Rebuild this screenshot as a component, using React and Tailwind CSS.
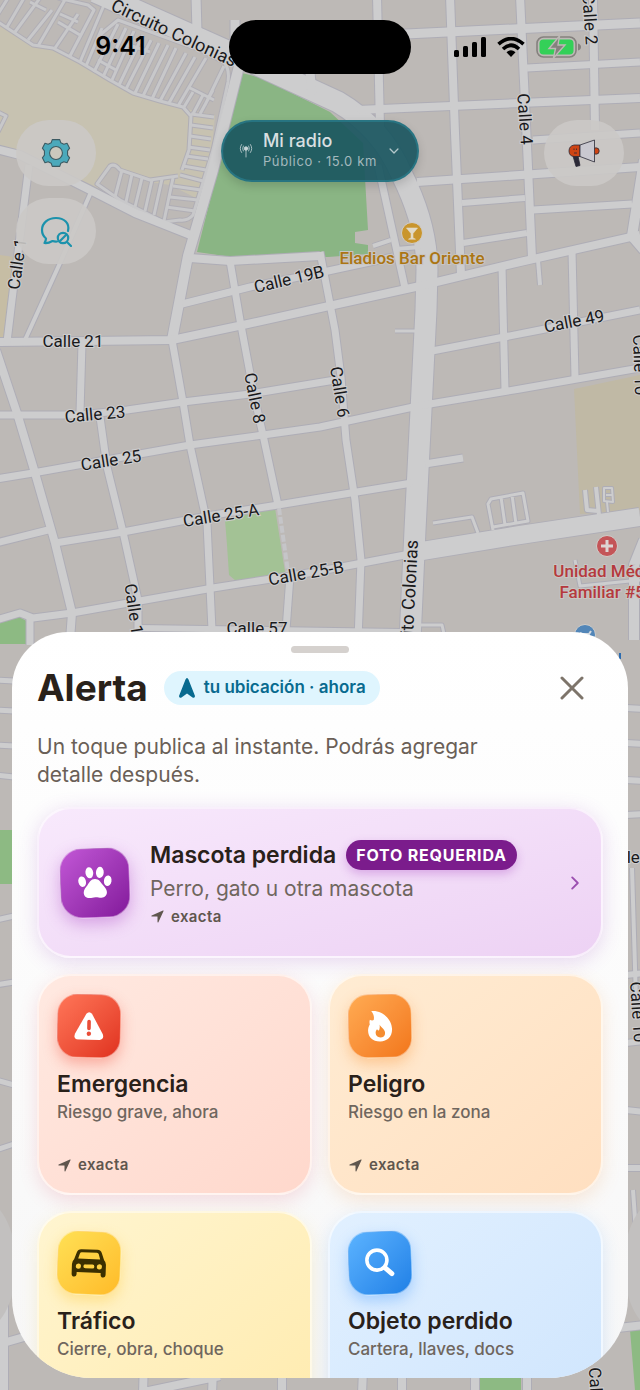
import { useState } from "react";
import { IoChevronDown, IoChevronForward, IoNavigate } from "react-icons/io5";

const ROADS = [
    { w: 21, d: "M95 -8L225 50L338 102Q382 128 402 175Q427 225 427 270L426 310L415 530L410 640" },
    { w: 18, d: "M416 552L520 535L640 517" },
    { w: 10, d: "M240 62L213 170L188 256L172 340" },
    { w: 8, d: "M-4 149L20 155L90 190L135 213L193 236" },
    { w: 8, d: "M190 258L230 261L320 256" },
    { w: 8, d: "M-4 342L172 340L243 325L320 308L420 286L520 262L640 235" },
    { w: 7, d: "M182 304L250 287L328 271L393 257" },
    { w: 7, d: "M320 252L335 330L341 377L346 440L355 500L361 560L358 640" },
    { w: 7, d: "M230 261L240 320L255 400L263 435L278 505" },
    { w: 7, d: "M290 576L286 630" },
    { w: 7, d: "M-4 415L80 415L127 410L183 402L250 394L335 380" },
    { w: 7, d: "M-4 479L33 473L190 445L263 435L320 427L418 406L520 389L640 368" },
    { w: 7, d: "M-4 543L48 530M55 543L123 532L213 515L278 505L320 498L412 483" },
    { w: 7, d: "M-4 620L20 613L33 618L72 613L213 588L290 576L320 571L410 554" },
    { w: 7, d: "M172 340L183 402L190 445L207 523L212 630" },
    { w: 8, d: "M-4 350L17 413L35 473L55 543L72 613L70 640" },
    { w: 7, d: "M100 417L107 467L123 532L138 600L138 640" },
    { w: 7, d: "M82 343L80 413" },
    { w: 7, d: "M29 165L12 300L7 342" },
    { w: 4, d: "M91 192L60 263L35 318L25 340" },
    { w: 7, d: "M30 616L30 645" },
    { w: 6, d: "M140 628L400 632" },
    { w: 9, d: "M385 35L640 23" },
    { w: 7, d: "M527 68L640 62" },
    { w: 8, d: "M357 110L640 98" },
    { w: 7, d: "M533 140L640 133" },
    { w: 8, d: "M417 182L640 167" },
    { w: 6, d: "M462 203L525 198" },
    { w: 7, d: "M533 210L632 204" },
    { w: 6, d: "M463 243L527 233" },
    { w: 8, d: "M377 -4L380 127" },
    { w: 7, d: "M378 165L405 288" },
    { w: 9, d: "M235 20L235 50M196 -4L197 32" },
    { w: 9, d: "M310 72L312 95" },
    { w: 8, d: "M450 -4L455 133L461 275" },
    { w: 8, d: "M520 -4L528 167L532 258" },
    { w: 8, d: "M593 -4L595 130" },
    { w: 10, d: "M644 160L632 236L644 250" },
    { w: 7, d: "M502 266L503 310L505 390" },
    { w: 7, d: "M572 251L575 377" },
    { w: 4, d: "M538 260L540 285" },
    { w: 7, d: "M432 351L540 330L640 310" },
    { w: 3, d: "M395 331L416 331" },
    { w: 4, d: "M373 246L391 240M396 249L420 247" },
    { w: 7, d: "M425 464L463 458" },
    { w: 3, d: "M433 523L472 517L478 533" },
    { w: 3, d: "M493 530L488 504L491 499L523 493L528 521L493 527M501 497L505 525M512 495L516 524" },
    { w: 4, d: "M585 490L587 510L598 511M596 487L599 515" },
    { w: 2, d: "M604 488L612 488L613 502L604 501ZM606 495L613 495M607 502L608 512" },
    { w: 3, d: "M575 560L580 586L640 580" },
    { w: 10, d: "M644 540L634 565L634 640" },
    { w: 3, d: "M420 625L442 625L444 634" },
    { w: 5, d: "M-4 680L14 681M-4 710L14 711M-4 745L14 746M-4 775L14 777M-4 920L14 916M-4 985L14 982M-4 1080L14 1085M-4 1150L14 1144" },
    { w: 6, d: "M626 708L644 709M626 743L644 744M626 780L644 781M626 815L644 814M626 975L644 973M626 1043L644 1041M626 1110L644 1112M626 1168L644 1168" },
    { w: 4, d: "M632 868L636 1000M633 1190L640 1290" },
    { w: 8, d: "M-4 1345L24 1337L70 1322M4 1300L4 1394M144 1360L143 1394M213 1370L212 1394M282 1370L282 1394M144 1392L220 1376" },
    { w: 8, d: "M363 1370L362 1394M402 1370L402 1394M475 1370L475 1394M527 1370L527 1394M600 1330L644 1325" },
];

// streets of the housing blocks beside the open lot
const LANES = [
    "M-2 22L33 45L53 48L80 62L110 80L133 93L160 101L183 107L191 116L189 150L182 170",
    "M100 35L118 20L200 50L224 62Q230 70 228 82L213 150L193 215Q188 221 180 220L164 222L120 200L97 184L110 166Q115 163 120 170L150 180L178 176",
    "M8 -2L-2 14M24 -2L7 27M40 -2L15 32M52 10L28 40M66 -2L38 46M78 14L55 48M58 -2L88 5L94 10L70 56M30 2L46 10",
    "M104 5L80 62M102 28L86 66M60 14L78 22M58 22L80 35M118 24L94 72M126 28L103 77M134 31L112 80M143 35L119 85M151 40L126 89",
    "M159 43L135 93M168 45L143 96M176 48L152 99M186 53L160 101M195 57L169 103M98 60L116 70M126 44L150 52M206 58L178 106",
    "M188 87L214 100M213 90L200 114M224 66L205 105M193 92L184 107M203 95L193 114",
    "M191 114L214 117M191 125L213 128M190 136L211 139M188 147L210 150M186 156L208 159M183 166L206 170M180 175L203 181M173 186L201 190M170 197L198 200M166 207L195 211",
    "M122 170L115 197M132 174L126 202M142 178L135 207M152 180L145 211M162 179L154 215M173 178L164 221",
    "M-2 112L6 116L-2 132",
];

const STREET_NAMES = [
    { x: 590, y: 19, a: 86, t: "Calle 2" },
    { x: 525, y: 119, a: 86, t: "Calle 4" },
    { x: 17, y: 264, a: -82, t: "Calle 1" },
    { x: 289, y: 279, a: -13, t: "Calle 19B" },
    { x: 73, y: 341, a: 0, t: "Calle 21" },
    { x: 574, y: 321, a: -11, t: "Calle 49" },
    { x: 255, y: 398, a: 79, t: "Calle 8" },
    { x: 340, y: 392, a: 81, t: "Calle 6" },
    { x: 95, y: 414, a: -5, t: "Calle 23" },
    { x: 111, y: 460, a: -9, t: "Calle 25" },
    { x: 221, y: 515, a: -9, t: "Calle 25-A" },
    { x: 306, y: 573, a: -10, t: "Calle 25-B" },
    { x: 134, y: 609, a: 82, t: "Calle 1" },
    { x: 257, y: 628, a: 0, t: "Calle 57" },
    { x: 640, y: 365, a: 88, t: "Calle 10" },
    { x: 621, y: 857, a: 0, t: "Calle" },
    { x: 638, y: 1012, a: 86, t: "Calle 10" },
    { x: 596, y: 1386, a: 86, t: "Calle" },
];

const AVENUE_NAMES = [
    { x: 174, y: 33, a: 25, t: "Circuito Colonias" },
    { x: 409, y: 597, a: -87, t: "cuito Colonias" },
];

const ALERTS = [
    {
        id: "emergencia", title: "Emergencia", detail: "Riesgo grave, ahora", Icon: WarningIcon,
        card: "from-[#ffe9e1] to-[#ffd8cc] shadow-[0_6px_18px_rgba(220,90,110,0.18)]",
        tile: "from-[#ff7558] to-[#e0301e] rotate-1 text-white shadow-[0_6px_14px_rgba(240,70,50,0.35)]",
    },
    {
        id: "peligro", title: "Peligro", detail: "Riesgo en la zona", Icon: FlameIcon,
        card: "from-[#ffecd3] to-[#ffdfc0] shadow-[0_6px_18px_rgba(240,150,70,0.18)]",
        tile: "from-[#ffab52] to-[#f27618] -rotate-1 text-white shadow-[0_6px_14px_rgba(250,140,40,0.35)]",
    },
    {
        id: "trafico", title: "Tráfico", detail: "Cierre, obra, choque", Icon: CarIcon,
        card: "from-[#fff5d0] to-[#ffebae] shadow-[0_6px_18px_rgba(240,200,70,0.18)]",
        tile: "from-[#ffe054] to-[#ffbb27] rotate-2 text-[#3b2f00] shadow-[0_6px_14px_rgba(255,200,50,0.4)]",
    },
    {
        id: "objeto", title: "Objeto perdido", detail: "Cartera, llaves, docs", Icon: SearchIcon,
        card: "from-[#e1f0ff] to-[#cfe5fd] shadow-[0_6px_18px_rgba(70,150,240,0.18)]",
        tile: "from-[#5bb3ff] to-[#1f80e6] -rotate-2 text-white shadow-[0_6px_14px_rgba(60,150,255,0.35)]",
    },
];

function PawIcon() {
    return (
        <svg viewBox="0 0 34 34" className="size-[34px]" fill="currentColor">
            <ellipse cx="11.7" cy="6.6" rx="3.9" ry="5.6" transform="rotate(-6 11.7 6.6)" />
            <ellipse cx="22.2" cy="6.6" rx="3.9" ry="5.6" transform="rotate(6 22.2 6.6)" />
            <ellipse cx="4.2" cy="15.2" rx="3.8" ry="5.3" transform="rotate(-12 4.2 15.2)" />
            <ellipse cx="29.8" cy="15.2" rx="3.8" ry="5.3" transform="rotate(12 29.8 15.2)" />
            <path d="M17 13c-4 0-5.500 3-7.600 6-2 2.600-4 4.200-4 7.400 0 3.500 2.500 5.500 5.600 5.500 2.200 0 3.700-.7 6-.7s3.800.7 6 .7c3.100 0 5.600-2 5.600-5.500 0-3.200-2-4.800-4-7.400-2.100-3-3.600-6-7.600-6z" />
        </svg>
    );
}

function WarningIcon() {
    return (
        <svg viewBox="0 0 30 28" className="w-[30px] h-7">
            <path d="M12.200 1.800q2.800-3.200 5.600 0l11 20q2 5-3 6h-21.600q-5-1-3-6z" fill="currentColor" />
            <path d="M15 9.500v7" stroke="#e94d38" strokeWidth="3.600" strokeLinecap="round" />
            <circle cx="15" cy="21.700" r="2.200" fill="#e94d38" />
        </svg>
    );
}

function FlameIcon() {
    return (
        <svg viewBox="0 0 26 32" className="w-[26px] h-8">
            <path d="M4.500 1C14 0 24.800 8 25 19.500 25 27 20 31.500 13 31.500 5.500 31.500 1 27 1 20.500c0-2.200.8-4.500 1.800-6.200C2.400 12.500 2.400 11 3 9.500c1 .8 2.600 1 3.800.5C7.500 7 7 3.500 4.500 1z" fill="currentColor" />
            <path d="M12.500 14.500c.3 2 5.500 4.500 5.500 8.500 0 3-2.200 4.500-4.800 4.500S8.500 25.800 8.500 23c0-1.600.6-2.700 1.500-3.700.5.8 1 1.200 1.800 1.200.9-1.500 1.200-3.500.7-6z" fill="#f58d31" />
        </svg>
    );
}

function CarIcon() {
    return (
        <svg viewBox="0 0 36 30" className="w-9 h-[30px]">
            <path d="M10 1.500h16q3.500 0 4.500 3.200l2.500 7q2 1.800 2 4.800v9.500q0 3-2.500 3t-2.500-3v-1.500H6V26q0 3-2.500 3T1 26v-9.500q0-3 2-4.800l2.500-7Q6.500 1.500 10 1.500z" fill="currentColor" />
            <path d="M10.500 4.500h15q1.500 0 2 1.500l1.500 5H7l1.500-5q.5-1.500 2-1.500z" fill="#ffd142" />
            <circle cx="7.500" cy="18.500" r="2.600" fill="#ffd142" />
            <circle cx="28.500" cy="18.500" r="2.600" fill="#ffd142" />
            <rect x="12.500" y="16.500" width="11" height="4" rx="2" fill="#ffd142" />
        </svg>
    );
}

function SearchIcon() {
    return (
        <svg viewBox="0 0 30 30" className="size-[30px]" fill="none" stroke="currentColor" strokeLinecap="round">
            <circle cx="12" cy="12" r="10" strokeWidth="3.600" />
            <path d="M20 20l6.500 6" strokeWidth="5" />
        </svg>
    );
}

function GearIcon() {
    return (
        <svg viewBox="0 0 28 28" className="size-[30px]">
            <path
                d="M10.500 1.500h7l1 3 2.800 1.300 3-.8 2.400 4.500-1.900 2.500v4l1.900 2.500-2.400 4.500-3-.8-2.800 1.300-1 3h-7l-1-3-2.800-1.300-3 .8-2.400-4.500 1.900-2.500v-4L1.300 9.500 3.700 5l3 .8 2.800-1.300z"
                fill="#4ba9bb" stroke="#3c5a62" strokeWidth="1" strokeLinejoin="round"
            />
            <circle cx="14" cy="14" r="6" fill="#cbc8bd" stroke="#3c5a62" strokeWidth="1" />
        </svg>
    );
}

function ChatSearchIcon() {
    return (
        <svg viewBox="0 0 32 32" className="size-8" fill="none" stroke="#1c92ac" strokeWidth="2.200" strokeLinecap="round" strokeLinejoin="round">
            <path d="M28 16C30 8 24 3 16 3 8 3 2 8 2 15c0 3.500 1.500 6.500 4 8.500 0 1.800-.6 3-1.500 4.500 3 .5 5.500-.6 8-2 1.500.5 3 .6 4.500.5" />
            <circle cx="23" cy="23" r="5.200" />
            <path d="M27 27l4 4M20 26l6-6" />
        </svg>
    );
}

function MegaphoneIcon() {
    return (
        <svg viewBox="0 0 32 28" className="w-8 h-7" stroke="#2b2937" strokeWidth="0.8" strokeLinejoin="round">
            <path d="M5 17h5l2 9.500-4 1z" fill="#2b2937" />
            <circle cx="28" cy="12" r="3.200" fill="#cf4413" />
            <path d="M12 6H6Q1 7 1 12t5 5.500h6z" fill="#cf4413" />
            <path d="M12 6L26.500 1v22L12 17.500z" fill="#c9c8d0" />
            <path d="M6 9.500v1.500M8.500 9.500v1.500M6 14h3" fill="none" />
        </svg>
    );
}

function AntennaIcon() {
    return (
        <svg viewBox="0 0 14 16" className="w-3.5 h-4 text-[#c9d6d8]" fill="none" stroke="currentColor" strokeWidth="0.8" strokeLinecap="round">
            <circle cx="7" cy="5.500" r="1.800" fill="currentColor" />
            <path d="M7 7v7M4.300 3q-1.500 2.500 0 5M9.700 3q1.500 2.500 0 5M2.600 1.500q-2.800 4 0 8M11.400 1.500q2.800 4 0 8" />
        </svg>
    );
}

function StatusIcons() {
    return (
        <div className="flex items-center gap-[11px]">
            <svg viewBox="0 0 32 20" className="w-8 h-5">
                <rect x="0" y="13" width="5" height="7" rx="1.500" />
                <rect x="9" y="9" width="5" height="11" rx="1.500" />
                <rect x="18" y="5" width="5" height="15" rx="1.500" />
                <rect x="27" y="0" width="5" height="20" rx="1.500" />
            </svg>
            <svg viewBox="0 0 28 20" className="w-7 h-5" fill="none" stroke="#000" strokeWidth="3.600">
                <path d="M1.500 7.200Q14-4 26.500 7.200M6 12Q14 4.500 22 12" />
                <path d="M9.500 15.200Q14 11.500 18.500 15.200L14 20z" fill="#000" stroke="none" />
            </svg>
            <svg viewBox="0 0 45 22" className="w-[45px] h-[22px]">
                <rect x="1" y="1" width="39" height="20" rx="6.500" fill="none" stroke="#85817e" strokeWidth="1.600" />
                <path d="M42 7.500q3 1 3 3.500t-3 3.500z" fill="#85817e" />
                <rect x="3.500" y="3.500" width="34" height="15" rx="4" fill="#34d058" />
                <path d="M23.500 0L13 12.500h6.500L17.500 22 29 9h-7z" fill="#85817e" stroke="#bdb9b6" strokeWidth="1.400" />
            </svg>
        </div>
    );
}

function MapBackdrop() {
    return (
        <svg
            viewBox="0 0 640 1390"
            preserveAspectRatio="xMidYMin slice"
            className="absolute inset-0 size-full"
            aria-hidden="true"
        >
            <rect width="640" height="1390" fill="#bdb9b6" />
            <path d="M0 25L33 46L60 50L80 62L110 80L133 95L160 102L187 109L215 115L212 150L200 200L170 185L150 182L112 166L98 188L60 170L0 150z" fill="#c7c2b1" />
            <path d="M0 255L14 257L6 338L0 338z" fill="#c6bda4" />
            <path d="M574 389L640 375L640 510L580 514z" fill="#c0b9a5" />
            <path d="M242 73L262 78L330 112L363 143L368 230L355 232L355 243L368 245L368 254L328 257L232 257L197 252z" fill="#8ab584" />
            <path d="M225 520L275 508L285 572L236 581L229 575L227 545z" fill="#a3c295" />
            <path d="M0 622L18 616L28 622L26 644L0 644z" fill="#8dba83" />
            <path d="M0 830L14 830L14 884L0 884zM480 1370L521 1370L521 1390L480 1390zM630 1330L640 1330L640 1390L635 1390z" fill="#8dba83" />

            <g fill="none" strokeLinejoin="round">
                {LANES.map((d) => <path key={d} d={d} stroke="#b0aeb5" strokeWidth="5" />)}
                {ROADS.map((r) => <path key={r.d} d={r.d} stroke="#aeadb6" strokeWidth={r.w + 2} />)}
                {LANES.map((d) => <path key={d} d={d} stroke="#c8c8ca" strokeWidth="3" />)}
                {ROADS.map((r) => <path key={r.d} d={r.d} stroke="#cdcdce" strokeWidth={r.w} />)}
                <path d="M279 508L288 572" stroke="#c5c5c8" strokeWidth="4" strokeDasharray="7 2" />
            </g>

            <ellipse cx="-20" cy="1265" rx="36" ry="66" fill="#c2c0bf" />
            <ellipse cx="660" cy="1265" rx="36" ry="66" fill="#c2c0bf" />

            <g
                fontFamily="Roboto, sans-serif" fill="#19191b" textAnchor="middle"
                stroke="#cdcdce" strokeWidth="2" paintOrder="stroke"
            >
                {STREET_NAMES.map((s) => (
                    <text key={`${s.t}-${s.x}`} fontSize="17" transform={`translate(${s.x} ${s.y}) rotate(${s.a})`} dy="6">{s.t}</text>
                ))}
                {AVENUE_NAMES.map((s) => (
                    <text key={s.t} fontSize="18" transform={`translate(${s.x} ${s.y}) rotate(${s.a})`} dy="6">{s.t}</text>
                ))}
            </g>

            <g fontFamily="Roboto, sans-serif" fontSize="17" fontWeight="500" textAnchor="middle" stroke="#c8c5c2" strokeWidth="2" paintOrder="stroke">
                <text x="412" y="264" fill="#ab7513">Eladios Bar Oriente</text>
                <text x="610" y="577" fill="#b5393d">Unidad Médica</text>
                <text x="607" y="598" fill="#b5393d">Familiar #59</text>
            </g>
            <circle cx="412" cy="233" r="10.500" fill="#c9952c" stroke="#d0cdc9" />
            <path d="M406.500 228h11l-4.500 5.500v4.500l2.500 1.200h-7l2.500-1.200v-4.500z" fill="#e2dac7" stroke="#e2dac7" strokeWidth="0.600" />
            <circle cx="607" cy="546" r="10.500" fill="#c45558" stroke="#d0cdc9" />
            <path d="M607 540v12M601 546h12" stroke="#ddd5d3" strokeWidth="3" />
            <circle cx="585" cy="635" r="10.500" fill="#5286b8" stroke="#d0cdc9" />
            <path d="M580 633l2 1h7l2-3" fill="none" stroke="#d5dae0" strokeWidth="2" />
            <path d="M620 653v6" stroke="#2c6cb0" strokeWidth="2" />
        </svg>
    );
}

function MapButton({ label, children }) {
    return (
        <button
            type="button"
            aria-label={label}
            className="w-20 h-[66px] rounded-full flex items-center justify-center bg-[#cbc9c6]/90"
        >
            {children}
        </button>
    );
}

function Precision() {
    return (
        <span className="flex items-center gap-1.5 text-[15px] leading-5 font-semibold tracking-wide text-[#5f564e]">
            <IoNavigate className="size-[15px]" />
            exacta
        </span>
    );
}

function AlertCard({ alert, selected, onSelect }) {
    const { Icon } = alert;
    return (
        <button
            type="button"
            aria-pressed={selected}
            onClick={() => onSelect(alert.id)}
            className={`min-h-[221px] p-[18px] rounded-[34px] border-2 border-white/60 bg-linear-to-br flex flex-col items-start text-left ${alert.card}`}
        >
            <span className={`size-16 rounded-[20px] border border-white/40 bg-linear-to-br flex items-center justify-center ${alert.tile}`}>
                <Icon />
            </span>
            <span className="mt-3 text-[23px] leading-7 font-semibold text-[#29211a]">{alert.title}</span>
            <span className="text-[17px] leading-7 font-medium text-[#6f665e]">{alert.detail}</span>
            <span className="mt-auto">
                <Precision />
            </span>
        </button>
    );
}

const App = () => {
    const [selected, setSelected] = useState(null);
    const [open, setOpen] = useState(true);

    return (
        <div className="relative h-screen overflow-hidden flex flex-col font-[Inter,'Liberation_Sans',sans-serif]">
            <MapBackdrop />

            <header className="relative pt-5">
                <div className="grid grid-cols-[1fr_182px_1fr] items-center">
                    <div className="pl-3 text-center text-[25px] font-semibold text-black">9:41</div>
                    <div className="h-[54px] rounded-full bg-black" />
                    <div className="pr-4 flex justify-center">
                        <StatusIcons />
                    </div>
                </div>

                <div className="mt-[46px] px-4 flex items-start justify-between">
                    <div className="flex flex-col gap-3">
                        <MapButton label="Ajustes"><GearIcon /></MapButton>
                        <MapButton label="Buscar en el chat"><ChatSearchIcon /></MapButton>
                    </div>
                    <button
                        type="button"
                        className="h-[62px] px-4 rounded-full border-2 border-[#2a7f8f]/70 bg-[#17545e]/90 flex items-center gap-2.5 text-left shadow-[0_4px_10px_rgba(0,0,0,0.15)]"
                    >
                        <AntennaIcon />
                        <span className="flex flex-col">
                            <span className="text-lg leading-5 font-medium text-[#d8dfe0]">Mi radio</span>
                            <span className="text-[13px] leading-5 tracking-wider text-[#a3b9bd]">Público · 15.0 km</span>
                        </span>
                        <IoChevronDown className="size-3.5 text-[#b4c8cb]" />
                    </button>
                    <MapButton label="Avisos"><MegaphoneIcon /></MapButton>
                </div>
            </header>

            {open && (
                <section
                    aria-labelledby="alert-title"
                    className="relative mt-92 mx-3 mb-3 flex-1 min-h-0 overflow-y-auto [scrollbar-width:none] rounded-t-[56px] rounded-b-[80px] bg-linear-to-b from-white to-[#f7f7f7] px-[25px]"
                >
                    <div className="mt-3.5 mx-auto w-[58px] h-[7px] rounded-full bg-[#d5d1ce]" />

                    <div className="mt-2.5 flex items-center h-[50px]">
                        <h1 id="alert-title" className="text-[37px] leading-[50px] font-bold text-[#29211a]">Alerta</h1>
                        <span className="ml-4 h-[34px] px-3.5 rounded-full bg-[#dff5fe] flex items-center gap-2 text-[17px] font-semibold text-[#086a8f]">
                            <svg viewBox="0 0 18 20" className="w-[18px] h-5" fill="currentColor">
                                <path d="M9 0Q10 0 10.500 1.500L17 18Q17 20.500 14.500 19.500L9 15.500L3.500 19.500Q1 20.500 1 18L7.500 1.500Q8 0 9 0z" />
                            </svg>
                            tu ubicación · ahora
                        </span>
                        <button
                            type="button"
                            aria-label="Cerrar"
                            onClick={() => setOpen(false)}
                            className="ml-auto mr-[7px] size-12 flex items-center justify-center text-[#7d746a]"
                        >
                            <svg viewBox="0 0 24 24" className="size-6" fill="none" stroke="currentColor" strokeWidth="3" strokeLinecap="round">
                                <path d="M2 2l20 20M22 2L2 22" />
                            </svg>
                        </button>
                    </div>

                    <p className="mt-5 max-w-[470px] text-[21px] leading-7 text-[#6a6057]">
                        Un toque publica al instante. Podrás agregar detalle después.
                    </p>

                    <div className="mt-[18px] pb-8 grid grid-cols-2 gap-4">
                        <button
                            type="button"
                            aria-pressed={selected === "mascota"}
                            onClick={() => setSelected("mascota")}
                            className="col-span-2 min-h-[151px] pl-[21px] pr-4 rounded-[34px] border-2 border-white/60 bg-linear-to-br from-[#f8e9fc] to-[#edd2f4] flex items-center gap-5 text-left shadow-[0_4px_20px_rgba(150,70,190,0.2)]"
                        >
                            <span className="size-[70px] shrink-0 rounded-[22px] border border-white/40 bg-linear-to-br from-[#c257d6] to-[#83189b] -rotate-2 flex items-center justify-center text-white shadow-[0_6px_16px_rgba(160,50,190,0.35)]">
                                <PawIcon />
                            </span>
                            <span className="flex-1 flex flex-col">
                                <span className="flex items-center gap-2.5">
                                    <span className="text-[23px] leading-8 font-semibold text-[#29211a]">Mascota perdida</span>
                                    <span className="h-[30px] px-2.5 rounded-full bg-[#7b1c8c] flex items-center text-base font-bold tracking-wider text-white shadow-[0_4px_10px_rgba(160,50,190,0.3)]">
                                        FOTO REQUERIDA
                                    </span>
                                </span>
                                <span className="mt-1 text-[21px] leading-7 text-[#6f665e]">Perro, gato u otra mascota</span>
                                <span className="mt-1">
                                    <Precision />
                                </span>
                            </span>
                            <IoChevronForward className="size-5 text-[#9b4fb0]" />
                        </button>

                        {ALERTS.map((alert) => (
                            <AlertCard
                                key={alert.id}
                                alert={alert}
                                selected={selected === alert.id}
                                onSelect={setSelected}
                            />
                        ))}
                    </div>
                </section>
            )}
        </div>
    );
};

export default App;
